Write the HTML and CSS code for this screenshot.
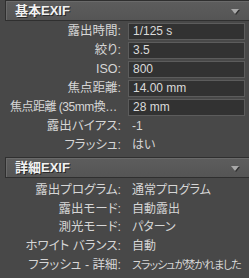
FILE: index.html
```html
<!DOCTYPE html>
<html lang="ja">
<head>
<meta charset="utf-8">
<link rel="stylesheet" href="styles.css">
</head>
<body>
<div class="panel">
  <div class="section-head">
    <span class="title">基本EXIF</span>
    <span class="arrow"></span>
  </div>
  <div class="rows first">
    <div class="row"><div class="label">露出時間:</div><div class="val box">1/125 s</div></div>
    <div class="row"><div class="label">絞り:</div><div class="val box">3.5</div></div>
    <div class="row"><div class="label">ISO:</div><div class="val box">800</div></div>
    <div class="row"><div class="label">焦点距離:</div><div class="val box">14.00 mm</div></div>
    <div class="row"><div class="label narrow">焦点距離 (35mm換算):</div><div class="val box">28 mm</div></div>
    <div class="row"><div class="label">露出バイアス:</div><div class="val">-1</div></div>
    <div class="row"><div class="label">フラッシュ:</div><div class="val">はい</div></div>
  </div>
  <div class="section-head">
    <span class="title">詳細EXIF</span>
    <span class="arrow"></span>
  </div>
  <div class="rows second">
    <div class="row"><div class="label">露出プログラム:</div><div class="val">通常プログラム</div></div>
    <div class="row"><div class="label">露出モード:</div><div class="val">自動露出</div></div>
    <div class="row"><div class="label">測光モード:</div><div class="val">パターン</div></div>
    <div class="row"><div class="label">ホワイト バランス:</div><div class="val">自動</div></div>
    <div class="row"><div class="label">フラッシュ - 詳細:</div><div class="val small">スラッシュが焚かれました</div></div>
  </div>
</div>
</body>
</html>
```

FILE: styles.css
```css
html, body {
  margin: 0;
  padding: 0;
  background: #484848;
  width: 249px;
  height: 278px;
  overflow: hidden;
}

.panel {
  font-family: "Liberation Sans", "Noto Sans CJK JP", sans-serif;
  font-size: 12px;
  font-feature-settings: "palt";
  color: #d6d6d6;
}

.section-head {
  margin-left: 5px;
  height: 19px;
  border: 1px solid #2f2f2f;
  border-right: none;
  background: linear-gradient(#5d5d5d, #555555);
  box-shadow: inset 1px 1px 0 #6a6a6a;
  display: flex;
  align-items: center;
  justify-content: space-between;
  padding-left: 9px;
  padding-right: 10px;
}

.title {
  font-size: 13px;
  font-weight: bold;
  color: #f2f2f2;
  text-shadow: 1px 1px 0 #2a2a2a;
  line-height: 19px;
}

.arrow {
  width: 0;
  height: 0;
  border-left: 4px solid transparent;
  border-right: 4px solid transparent;
  border-top: 5px solid #a8a8a8;
  filter: drop-shadow(1px 1px 0 #2e2e2e);
  margin-top: 2px;
}

.rows.first {
  padding-top: 1px;
  padding-bottom: 2px;
}

.rows.second {
  padding-top: 3px;
}

.row {
  display: grid;
  grid-template-columns: 121px minmax(0, 1fr);
  column-gap: 7px;
  height: 19px;
  align-items: center;
  padding-right: 4px;
}

.rows.second .row {
  height: 18.75px;
}

.label {
  font-size: 12.5px;
  text-align: right;
  padding-left: 10px;
  white-space: nowrap;
  overflow: hidden;
  text-overflow: ellipsis;
  line-height: 17px;
}

.label.narrow {
  font-size: 12px;
  letter-spacing: -0.5px;
}

.val {
  white-space: nowrap;
  overflow: hidden;
  line-height: 17px;
  padding-left: 4px;
}

.val.small {
  font-size: 11px;
  letter-spacing: -1px;
  padding-left: 4px;
}

.box {
  height: 15px;
  line-height: 15px;
  border: 1px solid #5c5c5c;
  background: #323232;
  color: #dadada;
  padding-left: 4px;
}
```
